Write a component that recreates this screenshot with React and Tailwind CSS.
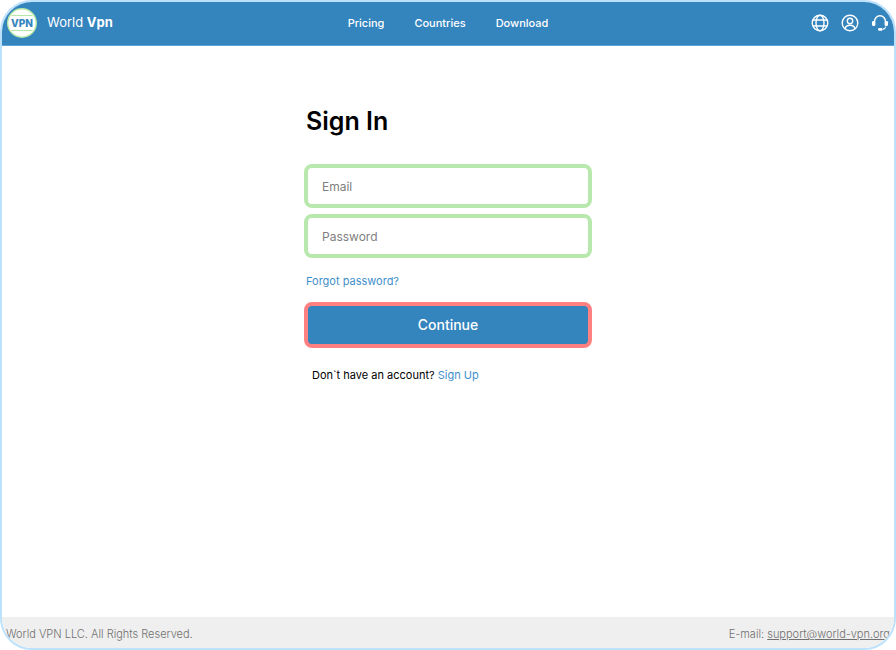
const navLinks = ["Pricing", "Countries", "Download"];

function Logo() {
  return (
    <svg viewBox="0 0 30 30" className="size-[30px]" aria-hidden="true">
      <circle cx="15" cy="15" r="14.3" fill="#fff" stroke="#b5e6a5" strokeWidth="1.4" />
      <path d="M4.500 7.500h21M4.500 22.500h21" stroke="#b5e6a5" strokeWidth="1.2" />
      <text x="15" y="18.500" textAnchor="middle" fontSize="10" fontWeight="800" fill="#3484be">
        VPN
      </text>
    </svg>
  );
}

function GlobeIcon() {
  return (
    <svg viewBox="0 0 18 18" className="size-[18px]" fill="none" stroke="currentColor" strokeWidth="1.4" aria-hidden="true">
      <circle cx="9" cy="9" r="7.8" />
      <ellipse cx="9" cy="9" rx="4" ry="7.8" />
      <path d="M1.900 6h14.200M1.900 12h14.200" />
    </svg>
  );
}

function UserIcon() {
  return (
    <svg viewBox="0 0 18 18" className="size-[18px]" fill="none" stroke="currentColor" strokeWidth="1.4" aria-hidden="true">
      <circle cx="9" cy="9" r="7.8" />
      <circle cx="9" cy="7" r="2.7" />
      <path d="M4 14.800c.5-2.300 2.300-3.600 5-3.600s4.500 1.300 5 3.600" />
    </svg>
  );
}

function SupportIcon() {
  return (
    <svg viewBox="0 0 18 18" className="size-[18px]" fill="none" stroke="currentColor" aria-hidden="true">
      <path d="M3.500 7.500a5.500 5.800 0 0 1 11 0" strokeWidth="1.5" />
      <path d="M14.800 12.500c-.3 1.500-1.300 2.500-3 2.900" strokeWidth="1.1" />
      <rect x="1" y="7" width="3.400" height="5" rx="1.300" fill="currentColor" stroke="none" />
      <rect x="13.600" y="7" width="3.400" height="5" rx="1.300" fill="currentColor" stroke="none" />
      <rect x="7" y="14" width="4.600" height="2.800" rx="1.300" fill="currentColor" stroke="none" />
    </svg>
  );
}

function Header() {
  return (
    <header className="grid grid-cols-[1fr_auto_1fr] items-center h-11 px-[5px] pb-px bg-[#3484be] border-b border-[#5ba3d6] text-white">
      <a href="#" className="flex items-center gap-2.5 text-[13px]">
        <Logo />
        <span>
          World <b className="font-bold">Vpn</b>
        </span>
      </a>
      <nav className="flex gap-[30px] text-[11px] font-medium">
        {navLinks.map((link) => (
          <a key={link} href="#">{link}</a>
        ))}
      </nav>
      <div className="flex justify-end gap-3">
        <button type="button" aria-label="Language"><GlobeIcon /></button>
        <button type="button" aria-label="Account"><UserIcon /></button>
        <button type="button" aria-label="Support"><SupportIcon /></button>
      </div>
    </header>
  );
}

function SignInForm() {
  const field =
    "w-full h-11 px-3.5 rounded-lg border-4 border-[#b8e8ad] bg-white text-xs placeholder:text-[#808080] outline-none";

  return (
    <form className="w-full max-w-72 pt-[59px]" onSubmit={(e) => e.preventDefault()}>
      <h1 className="pl-0.5 text-[25px] leading-8 font-semibold">Sign In</h1>
      <div className="flex flex-col gap-1.5 mt-[27px]">
        <input type="email" aria-label="Email" placeholder="Email" className={field} />
        <input type="password" aria-label="Password" placeholder="Password" className={field} />
      </div>
      <a href="#" className="block w-fit mt-[15px] pl-0.5 text-[11px] leading-4 text-[#3f8fca]">
        Forgot password?
      </a>
      <button
        type="submit"
        className="w-full h-[46px] mt-[13px] rounded-lg border-4 border-[#ff8080] bg-[#3484be] text-sm font-medium text-white"
      >
        Continue
      </button>
      <p className="mt-[19px] pl-2 text-[11px] leading-4">
        Don`t have an account? <a href="#" className="text-[#3f8fca]">Sign Up</a>
      </p>
    </form>
  );
}

function Footer() {
  return (
    <footer className="flex items-center justify-between h-[31px] px-1 pt-1 bg-[#efefef] text-[11px] font-light text-[#707070]">
      <p>World VPN LLC. All Rights Reserved.</p>
      <p>
        E-mail: <a href="mailto:support@world-vpn.org" className="underline">support@world-vpn.org</a>
      </p>
    </footer>
  );
}

export default function App() {
  return (
    <div className="flex flex-col min-h-screen overflow-hidden rounded-[32px] border-2 border-[#bbe1fd] bg-white text-black font-['Inter',sans-serif]">
      <Header />
      <main className="flex flex-1 justify-center">
        <SignInForm />
      </main>
      <Footer />
    </div>
  );
}
